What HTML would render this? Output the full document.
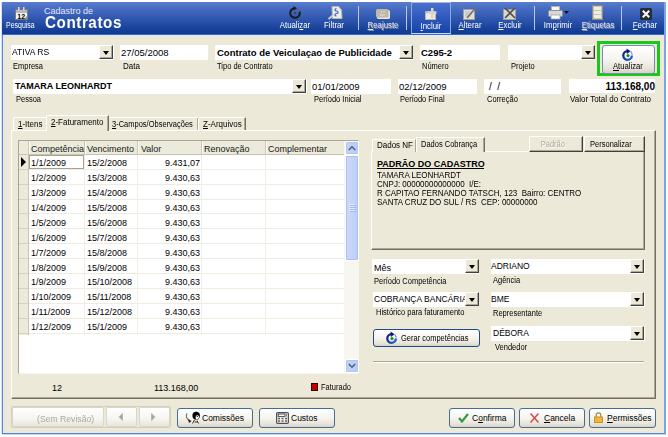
<!DOCTYPE html><html><head><meta charset="utf-8"><style>
*{box-sizing:border-box}
html,body{margin:0;padding:0;width:668px;height:437px;overflow:hidden;background:#fff;font-family:"Liberation Sans",sans-serif;color:#000}
.a{position:absolute}
.t{position:absolute;line-height:1;white-space:pre}
.dd{position:absolute;width:14px;height:14px;background:#ECE9D8;border-top:1px solid #fff;border-left:1px solid #fff;border-right:1px solid #404040;border-bottom:1px solid #404040;box-shadow:inset -1px -1px 0 #ACA899}
.dd:after{content:"";position:absolute;left:3px;top:5px;border-left:3px solid transparent;border-right:3px solid transparent;border-top:4px solid #000}
.xb{position:absolute;border:1px solid #4A6C94;border-radius:3px;background:linear-gradient(#FFFFFF 0%,#F5F4EF 50%,#E6E3D6 85%,#D8D2C2 100%)}
.cb{position:absolute;background:#ECE9D8;border-top:1px solid #fff;border-left:1px solid #fff;border-right:1px solid #404040;border-bottom:1px solid #404040;box-shadow:inset -1px -1px 0 #ACA899}
.sep{position:absolute;top:6px;width:1px;height:24px;background:#B8C8EE}
</style></head><body>
<div class="a" style="left:1px;top:2px;width:1px;height:432px;background:#D4E0F8"></div>
<div class="a" style="left:2px;top:2px;width:664px;height:432px;background:#ECE9D8;border-left:1px solid #5288E6;border-right:2px solid #7AA4EC;border-bottom:1px solid #4A80E0"></div>
<div class="a" style="left:2px;top:434px;width:664px;height:1px;background:#C8D8F6"></div>
<div class="a" style="left:2px;top:2px;width:662px;height:33px;background:linear-gradient(#5A7ECF 0px,#4A6FC4 5px,#3A60B8 12px,#2A52AA 19px,#1A449C 26px,#0E3990 32px);border-bottom:1px solid #2E6BEA"></div>
<svg class="a" style="left:15px;top:7px" width="13" height="13" viewBox="0 0 13 13">
<rect x="0" y="2" width="13" height="11" fill="#7C7C7A"/>
<rect x="1" y="3" width="11" height="3" fill="#B8B8B4"/>
<rect x="3" y="0" width="1.5" height="3.5" fill="#D8D8D8"/><rect x="8" y="0" width="1.5" height="3.5" fill="#D8D8D8"/>
<rect x="1" y="6" width="11" height="6" fill="#F4F4F4"/>
<path d="M9 12 L12 9 V12 Z" fill="#9A9A98"/>
<text x="6.2" y="11.8" font-family="Liberation Sans" font-size="7" font-weight="bold" text-anchor="middle" fill="#000">12</text>
</svg>
<div class="t" style="left:6px;top:21px;font-size:8.5px;color:#fff;transform:scaleX(0.82);transform-origin:0 0;">Pesquisa</div>
<div class="t" style="left:44px;top:7px;font-size:9px;color:#E2E9F8;">Cadastro de</div>
<div class="t" style="left:45px;top:15px;font-size:16px;font-weight:bold;color:#fff;transform:scaleX(0.95);transform-origin:0 0;letter-spacing:0.6px;">Contratos</div>
<div class="t" style="left:265px;top:21px;width:60px;text-align:center;font-size:8.5px;color:#fff;transform:scaleX(0.92);">Atuali<u>z</u>ar</div>
<div class="t" style="left:304px;top:21px;width:60px;text-align:center;font-size:8.5px;color:#fff;transform:scaleX(0.92);">Filtrar</div>
<div class="sep" style="left:358px"></div>
<div class="t" style="left:353px;top:21px;width:60px;text-align:center;font-size:8.5px;color:#E8E8E8;transform:scaleX(0.92);text-shadow:1px 1px 0 #7F8FB8;"><u>R</u>eajuste</div>
<div class="sep" style="left:406px"></div>
<div class="a" style="left:411px;top:2px;width:40px;height:32px;border:1px solid #8EA8DC;border-bottom-color:#C8D6F4;border-top-color:#A8B8DC;background:linear-gradient(#4A70CC,#2D58BC 50%,#1444A8)"></div>
<div class="t" style="left:401px;top:22px;width:60px;text-align:center;font-size:8.5px;color:#fff;transform:scaleX(0.92)"><u>I</u>ncluir</div>
<div class="t" style="left:440px;top:21px;width:60px;text-align:center;font-size:8.5px;color:#fff;transform:scaleX(0.92);"><u>A</u>lterar</div>
<div class="t" style="left:480px;top:21px;width:60px;text-align:center;font-size:8.5px;color:#fff;transform:scaleX(0.92);"><u>E</u>xcluir</div>
<div class="sep" style="left:534px"></div>
<div class="t" style="left:528px;top:21px;width:60px;text-align:center;font-size:8.5px;color:#fff;transform:scaleX(0.92);">Im<u>p</u>rimir</div>
<div class="t" style="left:568px;top:21px;width:60px;text-align:center;font-size:8.5px;color:#E8E8E8;transform:scaleX(0.92);text-shadow:1px 1px 0 #7F8FB8;"><u>E</u>tiquetas</div>
<div class="sep" style="left:621px"></div>
<div class="t" style="left:615px;top:21px;width:60px;text-align:center;font-size:8.5px;color:#fff;transform:scaleX(0.92);"><u>F</u>echar</div>
<svg class="a" style="left:288px;top:6px" width="14" height="14" viewBox="0 0 14 14">
<path d="M7 2.2 A4.8 4.8 0 1 0 11.6 5.6" fill="none" stroke="#1A1A1A" stroke-width="2"/>
<path d="M11.6 5.6 A4.8 4.8 0 0 0 9 2.6" fill="none" stroke="#5A5A5A" stroke-width="1.6" stroke-dasharray="1 1"/>
<path d="M5.5 0 L9 2.2 L5.8 4.6 Z" fill="#1A1A1A"/>
<circle cx="7" cy="7" r="1.3" fill="#444"/>
</svg>
<svg class="a" style="left:327px;top:6px" width="16" height="14" viewBox="0 0 16 14">
<path d="M5 0.5 H11.5 L14.5 4 L15 12.5 H5.5 Z" fill="#ECECE6" stroke="#B8B8AE"/>
<path d="M9.5 2.5 C7.5 2.5 7.5 5 9.5 5 C11.5 5 11.5 7.5 9.5 7.5 C7.5 7.5 7.5 10 9.5 10" fill="none" stroke="#3E62C8" stroke-width="1.2"/>
<path d="M6.5 9 L1.5 13" stroke="#D0D0C8" stroke-width="2"/>
</svg>
<svg class="a" style="left:376px;top:9px" width="14" height="10" viewBox="0 0 14 10">
<rect x="1" y="1" width="13" height="9" rx="1.5" fill="#E8E6DA"/>
<rect x="0" y="0" width="12.5" height="8.5" rx="1.5" fill="#BDB9A6"/>
<rect x="5" y="2" width="1" height="1.5" fill="#E6E4D8"/><rect x="7.5" y="2" width="1" height="1.5" fill="#E6E4D8"/>
<rect x="4" y="5.5" width="5" height="1" fill="#E6E4D8"/>
</svg>
<svg class="a" style="left:425px;top:8px" width="12" height="12" viewBox="0 0 12 12">
<rect x="0" y="3" width="11" height="9" fill="#B8B6AC"/>
<rect x="1" y="5" width="9" height="6" fill="#EEEEE8"/>
<rect x="6" y="0" width="2.5" height="10" fill="#D6D6D0"/>
<rect x="3" y="3.5" width="8.5" height="2.5" fill="#D6D6D0"/>
</svg>
<svg class="a" style="left:463px;top:6px" width="15" height="14" viewBox="0 0 15 14">
<rect x="0.5" y="3.5" width="11" height="10" fill="#E0E0DA" stroke="#A0A098"/>
<path d="M2 6 H9 M2 8 H9 M2 10 H8" stroke="#B8B8B0"/>
<path d="M4 12 L13 1.5" stroke="#707068" stroke-width="1.5"/>
</svg>
<svg class="a" style="left:503px;top:6px" width="15" height="14" viewBox="0 0 15 14">
<rect x="0.5" y="3.5" width="12" height="10" fill="#D8D8D2" stroke="#A0A098"/>
<path d="M2 2 L12 12 M12 2 L2 12" stroke="#505048" stroke-width="1.6"/>
</svg>
<svg class="a" style="left:548px;top:6px" width="22" height="14" viewBox="0 0 22 14">
<rect x="3.5" y="0.5" width="8" height="4" fill="#F4F4F4" stroke="#B0B0B0"/>
<rect x="0.5" y="4.5" width="14" height="6" rx="1" fill="#D8D8D8" stroke="#909090"/>
<rect x="3" y="9" width="9" height="4" fill="#fff" stroke="#A0A0A0" stroke-width="0.8"/>
<path d="M16 5 H21 L18.5 8 Z" fill="#101010"/>
</svg>
<svg class="a" style="left:592px;top:5px" width="11" height="15" viewBox="0 0 11 15">
<rect x="0.5" y="0.5" width="10" height="14" fill="#C8C6B8" stroke="#8E8C80"/>
<rect x="2" y="2" width="7" height="3" fill="#F0EEE4"/><rect x="2" y="6" width="7" height="3" fill="#F0EEE4"/><rect x="2" y="10" width="7" height="3" fill="#F0EEE4"/>
</svg>
<svg class="a" style="left:640px;top:8px" width="12" height="12" viewBox="0 0 12 12">
<rect x="0" y="0" width="12" height="12" rx="1.5" fill="#262C38"/>
<path d="M2.8 2.8 L9.2 9.2 M9.2 2.8 L2.8 9.2" stroke="#fff" stroke-width="2"/>
</svg>
<div class="a" style="left:11px;top:45px;width:103px;height:15px;background:#fff"></div>
<div class="dd" style="left:99px;top:45px"></div>
<div class="t" style="left:12px;top:48px;font-size:9px;transform:scaleX(0.95);transform-origin:0 0;">ATIVA RS</div>
<div class="t" style="left:13px;top:62px;font-size:8.5px;transform:scaleX(0.882);transform-origin:0 0;">Empresa</div>
<div class="a" style="left:120px;top:45px;width:88px;height:15px;background:#fff"></div>
<div class="t" style="left:121px;top:48px;font-size:9.5px;">27/05/2008</div>
<div class="t" style="left:123px;top:62px;font-size:8.5px;transform:scaleX(0.941);transform-origin:0 0;">Data</div>
<div class="a" style="left:215px;top:45px;width:198px;height:15px;background:#fff"></div>
<div class="dd" style="left:399px;top:45px"></div>
<div class="t" style="left:217px;top:48px;font-size:9.5px;font-weight:bold;">Contrato de Veiculaçao de Publicidade</div>
<div class="t" style="left:217px;top:62px;font-size:8.5px;transform:scaleX(0.882);transform-origin:0 0;">Tipo de Contrato</div>
<div class="a" style="left:420px;top:45px;width:80px;height:15px;background:#fff"></div>
<div class="t" style="left:421px;top:48px;font-size:9.5px;font-weight:bold;">C295-2</div>
<div class="t" style="left:422px;top:62px;font-size:8.5px;transform:scaleX(0.882);transform-origin:0 0;">Número</div>
<div class="a" style="left:508px;top:45px;width:87px;height:15px;background:#fff"></div>
<div class="dd" style="left:581px;top:45px"></div>
<div class="t" style="left:511px;top:62px;font-size:8.5px;transform:scaleX(0.882);transform-origin:0 0;">Projeto</div>
<div class="a" style="left:597px;top:41px;width:63px;height:35px;border:3px solid #19C819"></div>
<div class="xb" style="left:602px;top:45px;width:53px;height:29px;border-color:#6F8DB8"></div>
<svg class="a" style="left:621px;top:48px" width="13" height="13" viewBox="0 0 13 13">
<defs><linearGradient id="rg" x1="0" y1="0" x2="1" y2="1"><stop offset="0" stop-color="#14147C"/><stop offset="1" stop-color="#2A6AD0"/></linearGradient></defs>
<path d="M6.5 3.2 A4.3 4.3 0 1 0 10.9 7.5" fill="none" stroke="url(#rg)" stroke-width="2.3"/>
<path d="M5.6 0.4 L9.6 3.2 L5.8 6 Z" fill="#14147C"/>
<rect x="9.6" y="3.6" width="1.4" height="1" fill="#4070C0"/><rect x="10.2" y="5.2" width="1.4" height="1.2" fill="#3A80D8"/>
<circle cx="7" cy="7.6" r="1.6" fill="#109A30"/>
</svg>
<div class="t" style="left:613px;top:62px;font-size:8.5px;transform:scaleX(0.9);transform-origin:0 0;">Atualizar</div>
<div class="a" style="left:613px;top:70px;width:6px;height:1px;background:#000"></div>
<div class="a" style="left:13px;top:79px;width:294px;height:15px;background:#fff"></div>
<div class="dd" style="left:292px;top:79px"></div>
<div class="t" style="left:15px;top:82px;font-size:9px;font-weight:bold;">TAMARA LEONHARDT</div>
<div class="t" style="left:16px;top:95px;font-size:8.5px;transform:scaleX(0.882);transform-origin:0 0;">Pessoa</div>
<div class="a" style="left:311px;top:79px;width:80px;height:15px;background:#fff"></div>
<div class="t" style="left:312px;top:82px;font-size:9.5px;">01/01/2009</div>
<div class="t" style="left:314px;top:95px;font-size:8.5px;transform:scaleX(0.882);transform-origin:0 0;">Período Inicial</div>
<div class="a" style="left:398px;top:79px;width:79px;height:15px;background:#fff"></div>
<div class="t" style="left:399px;top:82px;font-size:9.5px;">02/12/2009</div>
<div class="t" style="left:400px;top:95px;font-size:8.5px;transform:scaleX(0.882);transform-origin:0 0;">Período Final</div>
<div class="a" style="left:484px;top:79px;width:77px;height:15px;background:#fff"></div>
<div class="t" style="left:489px;top:82px;font-size:10px;">/  /</div>
<div class="t" style="left:487px;top:95px;font-size:8.5px;transform:scaleX(0.882);transform-origin:0 0;">Correção</div>
<div class="a" style="left:569px;top:79px;width:86px;height:14px;background:#fff"></div>
<div class="t" style="left:569px;top:82px;font-size:10px;font-weight:bold;width:86px;text-align:right;">113.168,00</div>
<div class="t" style="left:570px;top:95px;font-size:8.5px;transform:scaleX(0.941);transform-origin:0 0;">Valor Total do Contrato</div>
<div class="a" style="left:11px;top:130px;width:645px;height:269px;border-top:1px solid #fff;border-left:1px solid #fff;border-right:1px solid #716F64;border-bottom:1px solid #716F64;box-shadow:inset -1px -1px 0 #ACA899"></div>
<div class="a" style="left:13px;top:117px;width:33px;height:13px;background:#ECE9D8;border-top:1px solid #fff;border-left:1px solid #fff;border-top-left-radius:2px"></div>
<div class="a" style="left:108px;top:117px;width:91px;height:13px;background:#ECE9D8;border-top:1px solid #fff;border-left:1px solid #fff;border-right:1px solid #716F64;box-shadow:inset -1px 0 0 #ACA899;border-top-left-radius:2px;"></div>
<div class="a" style="left:198px;top:117px;width:48px;height:13px;background:#ECE9D8;border-top:1px solid #fff;border-left:1px solid #fff;border-right:1px solid #716F64;box-shadow:inset -1px 0 0 #ACA899;border-top-left-radius:2px;"></div>
<div class="a" style="left:46px;top:115px;width:63px;height:16px;background:#ECE9D8;border-top:1px solid #fff;border-left:1px solid #fff;border-right:1px solid #716F64;box-shadow:inset -1px 0 0 #ACA899;border-top-left-radius:2px;z-index:2;"></div>
<div class="t" style="left:18px;top:120px;font-size:8.5px;transform:scaleX(0.941);transform-origin:0 0;"><u>1</u>-Itens</div>
<div class="t" style="left:51px;top:118px;font-size:8.5px;transform:scaleX(0.941);transform-origin:0 0;z-index:3;"><u>2</u>-Faturamento</div>
<div class="t" style="left:112px;top:120px;font-size:8.5px;transform:scaleX(0.882);transform-origin:0 0;"><u>3</u>-Campos/Observações</div>
<div class="t" style="left:203px;top:120px;font-size:8.5px;transform:scaleX(0.941);transform-origin:0 0;"><u>Z</u>-Arquivos</div>
<div class="a" style="left:18px;top:140px;width:341px;height:234px;background:#fff;border:1px solid #A9A698;border-right-color:#F4F3EE;border-bottom-color:#F4F3EE"></div>
<div class="a" style="left:19px;top:141px;width:1px;height:194px;background:#fff"></div>
<div class="a" style="left:19px;top:141px;width:325px;height:14px;background:#EBEADB;border-bottom:1px solid #C7C5B2"></div>
<div class="a" style="left:28px;top:141px;width:1px;height:14px;background:#CBC7B8"></div>
<div class="a" style="left:29px;top:142px;width:1px;height:12px;background:#fff"></div>
<div class="a" style="left:84px;top:141px;width:1px;height:14px;background:#CBC7B8"></div>
<div class="a" style="left:85px;top:142px;width:1px;height:12px;background:#fff"></div>
<div class="a" style="left:137px;top:141px;width:1px;height:14px;background:#CBC7B8"></div>
<div class="a" style="left:138px;top:142px;width:1px;height:12px;background:#fff"></div>
<div class="a" style="left:201px;top:141px;width:1px;height:14px;background:#CBC7B8"></div>
<div class="a" style="left:202px;top:142px;width:1px;height:12px;background:#fff"></div>
<div class="a" style="left:265px;top:141px;width:1px;height:14px;background:#CBC7B8"></div>
<div class="a" style="left:266px;top:142px;width:1px;height:12px;background:#fff"></div>
<div class="a" style="left:344px;top:141px;width:1px;height:14px;background:#CBC7B8"></div>
<div class="a" style="left:345px;top:142px;width:1px;height:12px;background:#fff"></div>
<div class="a" style="left:19px;top:155px;width:9px;height:180px;background:#EBEADB"></div>
<div class="a" style="left:19px;top:169px;width:9px;height:1px;background:#D6D2C2"></div>
<div class="a" style="left:28px;top:169px;width:316px;height:1px;background:#EEEBDF"></div>
<div class="a" style="left:19px;top:184px;width:9px;height:1px;background:#D6D2C2"></div>
<div class="a" style="left:28px;top:184px;width:316px;height:1px;background:#EEEBDF"></div>
<div class="a" style="left:19px;top:199px;width:9px;height:1px;background:#D6D2C2"></div>
<div class="a" style="left:28px;top:199px;width:316px;height:1px;background:#EEEBDF"></div>
<div class="a" style="left:19px;top:213px;width:9px;height:1px;background:#D6D2C2"></div>
<div class="a" style="left:28px;top:213px;width:316px;height:1px;background:#EEEBDF"></div>
<div class="a" style="left:19px;top:228px;width:9px;height:1px;background:#D6D2C2"></div>
<div class="a" style="left:28px;top:228px;width:316px;height:1px;background:#EEEBDF"></div>
<div class="a" style="left:19px;top:243px;width:9px;height:1px;background:#D6D2C2"></div>
<div class="a" style="left:28px;top:243px;width:316px;height:1px;background:#EEEBDF"></div>
<div class="a" style="left:19px;top:258px;width:9px;height:1px;background:#D6D2C2"></div>
<div class="a" style="left:28px;top:258px;width:316px;height:1px;background:#EEEBDF"></div>
<div class="a" style="left:19px;top:273px;width:9px;height:1px;background:#D6D2C2"></div>
<div class="a" style="left:28px;top:273px;width:316px;height:1px;background:#EEEBDF"></div>
<div class="a" style="left:19px;top:288px;width:9px;height:1px;background:#D6D2C2"></div>
<div class="a" style="left:28px;top:288px;width:316px;height:1px;background:#EEEBDF"></div>
<div class="a" style="left:19px;top:303px;width:9px;height:1px;background:#D6D2C2"></div>
<div class="a" style="left:28px;top:303px;width:316px;height:1px;background:#EEEBDF"></div>
<div class="a" style="left:19px;top:318px;width:9px;height:1px;background:#D6D2C2"></div>
<div class="a" style="left:28px;top:318px;width:316px;height:1px;background:#EEEBDF"></div>
<div class="a" style="left:19px;top:333px;width:9px;height:1px;background:#D6D2C2"></div>
<div class="a" style="left:28px;top:333px;width:316px;height:1px;background:#EEEBDF"></div>
<div class="a" style="left:28px;top:155px;width:1px;height:180px;background:#C7C5B2"></div>
<div class="a" style="left:84px;top:155px;width:1px;height:180px;background:#EEEDE6"></div>
<div class="a" style="left:137px;top:155px;width:1px;height:180px;background:#EEEDE6"></div>
<div class="a" style="left:201px;top:155px;width:1px;height:180px;background:#EEEDE6"></div>
<div class="a" style="left:265px;top:155px;width:1px;height:180px;background:#EEEDE6"></div>
<div class="t" style="left:31px;top:145px;font-size:9px;color:#202020;">Competência</div>
<div class="t" style="left:87px;top:145px;font-size:9px;color:#202020;">Vencimento</div>
<div class="t" style="left:141px;top:145px;font-size:9px;color:#202020;">Valor</div>
<div class="t" style="left:204px;top:145px;font-size:9px;color:#202020;">Renovação</div>
<div class="t" style="left:268px;top:145px;font-size:9px;color:#202020;">Complementar</div>
<div class="t" style="left:31px;top:159px;font-size:9px;">1/1/2009</div>
<div class="t" style="left:87px;top:159px;font-size:9px;">15/2/2008</div>
<div class="t" style="left:140px;top:159px;font-size:9px;width:60px;text-align:right;">9.431,07</div>
<div class="t" style="left:31px;top:174px;font-size:9px;">1/2/2009</div>
<div class="t" style="left:87px;top:174px;font-size:9px;">15/3/2008</div>
<div class="t" style="left:140px;top:174px;font-size:9px;width:60px;text-align:right;">9.430,63</div>
<div class="t" style="left:31px;top:189px;font-size:9px;">1/3/2009</div>
<div class="t" style="left:87px;top:189px;font-size:9px;">15/4/2008</div>
<div class="t" style="left:140px;top:189px;font-size:9px;width:60px;text-align:right;">9.430,63</div>
<div class="t" style="left:31px;top:204px;font-size:9px;">1/4/2009</div>
<div class="t" style="left:87px;top:204px;font-size:9px;">15/5/2008</div>
<div class="t" style="left:140px;top:204px;font-size:9px;width:60px;text-align:right;">9.430,63</div>
<div class="t" style="left:31px;top:219px;font-size:9px;">1/5/2009</div>
<div class="t" style="left:87px;top:219px;font-size:9px;">15/6/2008</div>
<div class="t" style="left:140px;top:219px;font-size:9px;width:60px;text-align:right;">9.430,63</div>
<div class="t" style="left:31px;top:234px;font-size:9px;">1/6/2009</div>
<div class="t" style="left:87px;top:234px;font-size:9px;">15/7/2008</div>
<div class="t" style="left:140px;top:234px;font-size:9px;width:60px;text-align:right;">9.430,63</div>
<div class="t" style="left:31px;top:249px;font-size:9px;">1/7/2009</div>
<div class="t" style="left:87px;top:249px;font-size:9px;">15/8/2008</div>
<div class="t" style="left:140px;top:249px;font-size:9px;width:60px;text-align:right;">9.430,63</div>
<div class="t" style="left:31px;top:264px;font-size:9px;">1/8/2009</div>
<div class="t" style="left:87px;top:264px;font-size:9px;">15/9/2008</div>
<div class="t" style="left:140px;top:264px;font-size:9px;width:60px;text-align:right;">9.430,63</div>
<div class="t" style="left:31px;top:278px;font-size:9px;">1/9/2009</div>
<div class="t" style="left:87px;top:278px;font-size:9px;">15/10/2008</div>
<div class="t" style="left:140px;top:278px;font-size:9px;width:60px;text-align:right;">9.430,63</div>
<div class="t" style="left:31px;top:293px;font-size:9px;">1/10/2009</div>
<div class="t" style="left:87px;top:293px;font-size:9px;">15/11/2008</div>
<div class="t" style="left:140px;top:293px;font-size:9px;width:60px;text-align:right;">9.430,63</div>
<div class="t" style="left:31px;top:308px;font-size:9px;">1/11/2009</div>
<div class="t" style="left:87px;top:308px;font-size:9px;">15/12/2008</div>
<div class="t" style="left:140px;top:308px;font-size:9px;width:60px;text-align:right;">9.430,63</div>
<div class="t" style="left:31px;top:323px;font-size:9px;">1/12/2009</div>
<div class="t" style="left:87px;top:323px;font-size:9px;">15/1/2009</div>
<div class="t" style="left:140px;top:323px;font-size:9px;width:60px;text-align:right;">9.430,63</div>
<div class="a" style="left:29px;top:155px;width:55px;height:14px;border:1px solid #A5A294"></div>
<svg class="a" style="left:21px;top:157px" width="6" height="10" viewBox="0 0 6 10"><path d="M0 0 L5 5 L0 10 Z" fill="#000"/></svg>
<div class="a" style="left:344px;top:141px;width:15px;height:232px;background:#F7F6F1"></div>
<div class="a" style="left:345px;top:141px;width:14px;height:14px;border:1px solid #fff;border-radius:2px;background:linear-gradient(90deg,#C6D3F7,#B8CAF5);box-shadow:inset 0 0 0 1px #B4C5EE"></div>
<svg class="a" style="left:348px;top:145px" width="8" height="6" viewBox="0 0 8 6"><path d="M0.8 5 L4 1.8 L7.2 5" fill="none" stroke="#4D6185" stroke-width="1.6"/></svg>
<div class="a" style="left:345px;top:155px;width:14px;height:106px;border:1px solid #fff;border-radius:2px;background:linear-gradient(90deg,#CCD9FB,#BCCEF8);box-shadow:inset 0 0 0 1px #ACC0EC"></div>
<div class="a" style="left:349px;top:204px;width:6px;height:1px;background:#E8EEFD"></div>
<div class="a" style="left:350px;top:205px;width:6px;height:1px;background:#9EB6EC"></div>
<div class="a" style="left:349px;top:206px;width:6px;height:1px;background:#E8EEFD"></div>
<div class="a" style="left:350px;top:207px;width:6px;height:1px;background:#9EB6EC"></div>
<div class="a" style="left:349px;top:208px;width:6px;height:1px;background:#E8EEFD"></div>
<div class="a" style="left:350px;top:209px;width:6px;height:1px;background:#9EB6EC"></div>
<div class="a" style="left:349px;top:210px;width:6px;height:1px;background:#E8EEFD"></div>
<div class="a" style="left:350px;top:211px;width:6px;height:1px;background:#9EB6EC"></div>
<div class="a" style="left:345px;top:359px;width:14px;height:14px;border:1px solid #fff;border-radius:2px;background:linear-gradient(90deg,#C6D3F7,#B8CAF5);box-shadow:inset 0 0 0 1px #B4C5EE"></div>
<svg class="a" style="left:348px;top:363px" width="8" height="6" viewBox="0 0 8 6"><path d="M0.8 1 L4 4.2 L7.2 1" fill="none" stroke="#4D6185" stroke-width="1.6"/></svg>
<div class="t" style="left:52px;top:384px;font-size:9px;">12</div>
<div class="t" style="left:154px;top:384px;font-size:9px;">113.168,00</div>
<div class="a" style="left:311px;top:383px;width:7px;height:8px;background:#C00000;border:1px solid #400000"></div>
<div class="t" style="left:321px;top:383px;font-size:8.5px;transform:scaleX(0.882);transform-origin:0 0;">Faturado</div>
<div class="a" style="left:371px;top:151px;width:274px;height:99px;border-top:1px solid #fff;border-left:1px solid #fff;border-right:1px solid #716F64;border-bottom:1px solid #716F64;box-shadow:inset -1px -1px 0 #ACA899"></div>
<div class="a" style="left:372px;top:139px;width:44px;height:13px;background:#ECE9D8;border-top:1px solid #fff;border-left:1px solid #fff;border-right:1px solid #ACA899;border-top-left-radius:2px"></div>
<div class="a" style="left:416px;top:137px;width:69px;height:15px;background:#ECE9D8;border-top:1px solid #fff;border-left:1px solid #fff;border-right:1px solid #716F64;box-shadow:inset -1px 0 0 #ACA899;z-index:2"></div>
<div class="t" style="left:377px;top:141px;font-size:8.5px;transform:scaleX(0.941);transform-origin:0 0;">Dados NF</div>
<div class="t" style="left:421px;top:140px;font-size:8.5px;transform:scaleX(0.882);transform-origin:0 0;z-index:3">Dados Cobrança</div>
<div class="cb" style="left:529px;top:136px;width:54px;height:16px"></div>
<div class="t" style="left:529px;top:140px;font-size:8.5px;color:#ACA899;width:54px;text-align:center;transform:scaleX(0.882);transform-origin:0 0;text-shadow:1px 1px 0 #fff">Padrão</div>
<div class="cb" style="left:584px;top:136px;width:61px;height:16px"></div>
<div class="t" style="left:584px;top:140px;font-size:8.5px;width:61px;text-align:center;transform:scaleX(0.882);transform-origin:0 0;">Personalizar</div>
<div class="t" style="left:377px;top:160px;font-size:9px;font-weight:bold;">PADRÃO DO CADASTRO</div>
<div class="a" style="left:377px;top:168px;width:107px;height:1px;background:#000"></div>
<div class="t" style="left:377px;top:171px;font-size:8.5px;transform:scaleX(0.941);transform-origin:0 0;">TAMARA LEONHARDT</div>
<div class="t" style="left:377px;top:180px;font-size:8.5px;transform:scaleX(0.941);transform-origin:0 0;">CNPJ: 00000000000000  I/E:</div>
<div class="t" style="left:377px;top:189px;font-size:8.5px;transform:scaleX(0.941);transform-origin:0 0;">R CAPITAO FERNANDO TATSCH, 123  Bairro: CENTRO</div>
<div class="t" style="left:377px;top:198px;font-size:8.5px;transform:scaleX(0.941);transform-origin:0 0;">SANTA CRUZ DO SUL / RS  CEP: 00000000</div>
<div class="a" style="left:372px;top:259px;width:107px;height:15px;background:#fff"></div>
<div class="dd" style="left:465px;top:259px"></div>
<div class="t" style="left:374px;top:264px;font-size:9px;">Mês</div>
<div class="t" style="left:374px;top:277px;font-size:8.5px;transform:scaleX(0.882);transform-origin:0 0;">Período Competência</div>
<div class="a" style="left:373px;top:292px;width:92px;height:15px;background:#fff;overflow:hidden"><div class="t" style="left:1px;top:3px;font-size:8.5px">COBRANÇA BANCÁRIA</div></div>
<div class="dd" style="left:465px;top:292px"></div>
<div class="t" style="left:376px;top:308px;font-size:8.5px;transform:scaleX(0.882);transform-origin:0 0;">Histórico para faturamento</div>
<div class="xb" style="left:373px;top:329px;width:107px;height:18px;border-color:#1F4B8E"></div>
<svg class="a" style="left:385px;top:331px" width="13" height="13" viewBox="0 0 13 13">
<defs><linearGradient id="rg2" x1="0" y1="0" x2="1" y2="1"><stop offset="0" stop-color="#14147C"/><stop offset="1" stop-color="#2A6AD0"/></linearGradient></defs>
<path d="M6.5 3.2 A4.3 4.3 0 1 0 10.9 7.5" fill="none" stroke="url(#rg2)" stroke-width="2.3"/>
<path d="M5.6 0.4 L9.6 3.2 L5.8 6 Z" fill="#14147C"/>
<rect x="9.6" y="3.6" width="1.4" height="1" fill="#4070C0"/><rect x="10.2" y="5.2" width="1.4" height="1.2" fill="#3A80D8"/>
<circle cx="7" cy="7.6" r="1.6" fill="#109A30"/>
</svg>
<div class="t" style="left:401px;top:334px;font-size:8.5px;transform:scaleX(0.882);transform-origin:0 0;">Gerar competências</div>
<div class="a" style="left:491px;top:259px;width:154px;height:15px;background:#fff"></div>
<div class="dd" style="left:630px;top:259px"></div>
<div class="t" style="left:491px;top:262px;font-size:8.5px;">ADRIANO</div>
<div class="t" style="left:493px;top:276px;font-size:8.5px;transform:scaleX(0.882);transform-origin:0 0;">Agência</div>
<div class="a" style="left:491px;top:292px;width:154px;height:15px;background:#fff"></div>
<div class="dd" style="left:630px;top:292px"></div>
<div class="t" style="left:491px;top:295px;font-size:8.5px;">BME</div>
<div class="t" style="left:493px;top:309px;font-size:8.5px;transform:scaleX(0.882);transform-origin:0 0;">Representante</div>
<div class="a" style="left:491px;top:326px;width:154px;height:15px;background:#fff"></div>
<div class="dd" style="left:630px;top:326px"></div>
<div class="t" style="left:493px;top:329px;font-size:8.5px;">DÉBORA</div>
<div class="t" style="left:495px;top:343px;font-size:8.5px;transform:scaleX(0.882);transform-origin:0 0;">Vendedor</div>
<div class="a" style="left:373px;top:361px;width:271px;height:2px;border-top:1px solid #ACA899;border-bottom:1px solid #fff"></div>
<div class="a" style="left:11px;top:406px;width:160px;height:22px;border:1px solid #D2CFC0;border-radius:2px;background:#ECE9D8"></div>
<div class="xb" style="left:12px;top:407px;width:92px;height:20px;border-color:#DAD7CA;border-radius:2px;background:linear-gradient(#FFFFFF,#F6F5F0 60%,#E8E6DC)"></div>
<div class="t" style="left:37px;top:415px;font-size:9px;color:#ACA899;transform:scaleX(0.96);transform-origin:0 0;">(Sem Revisão)</div>
<div class="xb" style="left:106px;top:407px;width:31px;height:20px;border-color:#DAD7CA;border-radius:2px;background:linear-gradient(#FFFFFF,#F6F5F0 60%,#E8E6DC)"></div>
<div class="xb" style="left:139px;top:407px;width:31px;height:20px;border-color:#DAD7CA;border-radius:2px;background:linear-gradient(#FFFFFF,#F6F5F0 60%,#E8E6DC)"></div>
<svg class="a" style="left:118px;top:412px" width="6" height="10" viewBox="0 0 6 10"><path d="M5 0.5 L0.5 5 L5 9.5 Z" fill="#A8A598" stroke="#fff" stroke-width="0.4"/></svg>
<svg class="a" style="left:150px;top:412px" width="6" height="10" viewBox="0 0 6 10"><path d="M1 0.5 L5.5 5 L1 9.5 Z" fill="#A8A598" stroke="#fff" stroke-width="0.4"/></svg>
<div class="xb" style="left:177px;top:408px;width:76px;height:20px"></div>
<div class="t" style="left:202px;top:414px;font-size:8.5px;">Comissões</div>
<div class="xb" style="left:259px;top:408px;width:76px;height:20px"></div>
<div class="t" style="left:291px;top:414px;font-size:8.5px;">Custos</div>
<div class="xb" style="left:449px;top:408px;width:66px;height:20px"></div>
<div class="t" style="left:472px;top:414px;font-size:8.5px;">C<u>o</u>nfirma</div>
<div class="xb" style="left:519px;top:408px;width:66px;height:20px"></div>
<div class="t" style="left:544px;top:414px;font-size:8.5px;"><u>C</u>ancela</div>
<div class="xb" style="left:589px;top:408px;width:67px;height:20px"></div>
<div class="t" style="left:607px;top:414px;font-size:8.5px;"><u>P</u>ermissões</div>
<svg class="a" style="left:185px;top:411px" width="16" height="13" viewBox="0 0 16 13">
<path d="M2 2.5 C0.5 5 1.5 8 4.5 9.5" fill="none" stroke="#707070" stroke-width="1.2"/>
<path d="M3 8 L6.5 10 L4 12 Z" fill="#202020"/>
<path d="M8.5 1.5 C10 0.5 13.5 0.5 14.5 2.5 C15.5 5 14.5 8 12.5 8.5 L10 8.5 C7.5 8 6.5 4 8.5 1.5 Z" fill="#000"/>
<path d="M11.5 4.5 C13 4 14.3 5 14 6.5 C13.6 8 12 8.6 11 8 C10.3 7 10.5 5 11.5 4.5 Z" fill="#fff"/>
<circle cx="12.2" cy="5.6" r="0.7" fill="#000"/>
<path d="M7.5 12.5 L9.5 9 M13.5 12.5 L12 9.5 M9.5 11 H12.5" stroke="#303030" stroke-width="1"/>
</svg>
<svg class="a" style="left:276px;top:412px" width="13" height="12" viewBox="0 0 13 12">
<rect x="0.6" y="0.6" width="11.8" height="10.8" rx="1.2" fill="#F0F0F0" stroke="#505050" stroke-width="1.2"/>
<rect x="2.2" y="2" width="6.8" height="2.4" fill="#fff" stroke="#404040" stroke-width="0.9"/>
<path d="M2 6.5 H4 M5.5 6.5 H7.5 M9 6.5 H11 M2 9 H4 M5.5 9 H7.5 M9 9 H11" stroke="#606060" stroke-width="1.3"/>
<path d="M10.5 2 V4.5" stroke="#808080" stroke-width="1"/>
</svg>
<svg class="a" style="left:458px;top:413px" width="11" height="10" viewBox="0 0 11 10"><path d="M1 5 L4 8.5 L10 1" fill="none" stroke="#3A9A48" stroke-width="2.2"/></svg>
<svg class="a" style="left:530px;top:413px" width="9" height="10" viewBox="0 0 9 10"><path d="M0.5 0.5 L8.5 9.5 M8.5 0.5 L0.5 9.5" stroke="#D04848" stroke-width="1.5"/></svg>
<svg class="a" style="left:594px;top:412px" width="9" height="11" viewBox="0 0 9 11"><path d="M2.2 5 V3.2 A2.3 2.3 0 0 1 6.8 3.2 V5" fill="none" stroke="#A08850" stroke-width="1.2"/><rect x="0.5" y="5" width="8" height="5.5" fill="#F0B838" stroke="#C89030"/></svg>
</body></html>
